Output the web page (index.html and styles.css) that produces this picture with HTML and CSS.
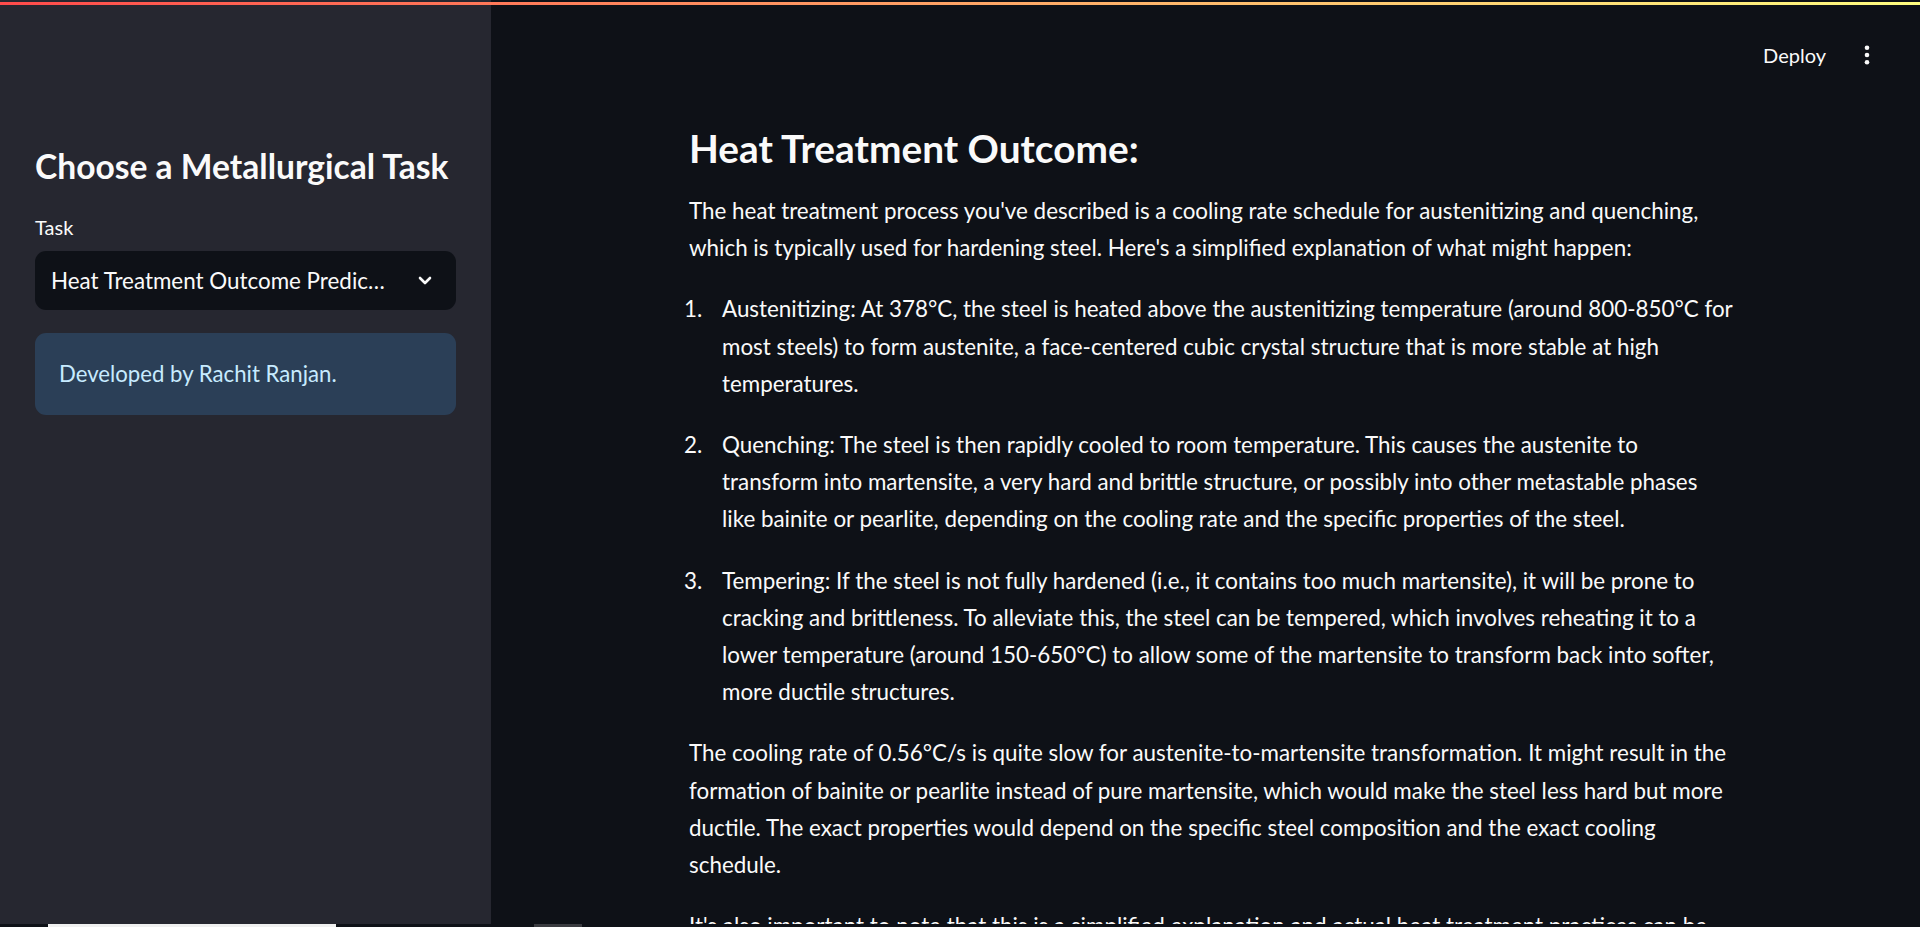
FILE: index.html
```html
<!DOCTYPE html>
<html lang="en">
<head>
<meta charset="utf-8">
<title>Metallurgical Tasks</title>
<link rel="stylesheet" href="styles.css">
</head>
<body>
<div class="decoration"></div>
<div class="app">
  <aside class="sidebar">
    <h2 class="sidebar-title">Choose a Metallurgical Task</h2>
    <div class="field-label">Task</div>
    <div class="select">
      <span class="select-value">Heat Treatment Outcome Prediction</span>
      <svg class="select-chevron" viewBox="0 0 14 9" width="14" height="9"><path d="M2 2 L7 7 L12 2" fill="none" stroke="#fafafa" stroke-width="2.6" stroke-linecap="round" stroke-linejoin="round"/></svg>
    </div>
    <div class="info">Developed by Rachit Ranjan.</div>
  </aside>
  <main class="main">
    <header class="header">
      <span class="deploy">Deploy</span>
      <svg class="kebab" viewBox="0 0 24 24" width="24" height="24"><circle cx="12" cy="4.7" r="2.3" fill="#fafafa"/><circle cx="12" cy="12" r="2.3" fill="#fafafa"/><circle cx="12" cy="19.3" r="2.3" fill="#fafafa"/></svg>
    </header>
    <article class="content">
      <h3>Heat Treatment Outcome:</h3>
      <p>The heat treatment process you've described is a cooling rate schedule for austenitizing and quenching, which is typically used for hardening steel. Here's a simplified explanation of what might happen:</p>
      <ol>
        <li>Austenitizing: At 378°C, the steel is heated above the austenitizing temperature (around 800-850°C for most steels) to form austenite, a face-centered cubic crystal structure that is more stable at high temperatures.</li>
        <li>Quenching: The steel is then rapidly cooled to room temperature. This causes the austenite to transform into martensite, a very hard and brittle structure, or possibly into other metastable phases like bainite or pearlite, depending on the cooling rate and the specific properties of the steel.</li>
        <li>Tempering: If the steel is not fully hardened (i.e., it contains too much martensite), it will be prone to cracking and brittleness. To alleviate this, the steel can be tempered, which involves reheating it to a lower temperature (around 150-650°C) to allow some of the martensite to transform back into softer, more ductile structures.</li>
      </ol>
      <p>The cooling rate of 0.56°C/s is quite slow for austenite-to-martensite transformation. It might result in the formation of bainite or pearlite instead of pure martensite, which would make the steel less hard but more ductile. The exact properties would depend on the specific steel composition and the exact cooling schedule.</p>
      <p>It's also important to note that this is a simplified explanation and actual heat treatment practices can be more complex, involving several stages and careful control of temperatures and holding times.</p>
    </article>
  </main>
</div>
<div class="bottom-strip">
  <span class="strip-thumb"></span>
  <span class="strip-mark"></span>
</div>
</body>
</html>
```
FILE: styles.css
```css
* { box-sizing: border-box; }
html, body { margin: 0; height: 100%; }
body {
  background: #0e1117;
  color: #fafafa;
  font-family: Lato, "Liberation Sans", sans-serif;
  overflow: hidden;
}
.decoration {
  position: fixed;
  top: 2px;
  left: 0;
  right: 0;
  height: 3px;
  background: linear-gradient(90deg, #ff4b4b, #fffd80);
  z-index: 5;
}
.app { display: flex; height: 927px; }

.sidebar {
  width: 491px;
  flex: none;
  background: #262730;
  padding: 146px 35px 0;
}
.sidebar-title {
  font-size: 33.6px;
  font-weight: 700;
  line-height: 1.2;
  margin: 0 0 25px;
}
.field-label { font-size: 20px; line-height: 32px; }
.select {
  margin-top: 8px;
  height: 59px;
  background: #0e1117;
  border-radius: 11px;
  display: flex;
  align-items: center;
  padding: 0 24px 0 16px;
  gap: 28px;
}
.select-value {
  flex: 1;
  min-width: 0;
  font-size: 22.4px;
  white-space: nowrap;
  overflow: hidden;
  text-overflow: ellipsis;
}
.select-chevron { flex: none; }
.info {
  margin-top: 23px;
  background: #2b3f57;
  border-radius: 11px;
  padding: 22px 24px 23px;
  color: #c7ebff;
  font-size: 22.2px;
  line-height: 37px;
}

.main { flex: 1; display: flex; flex-direction: column; }
.header {
  height: 109px;
  flex: none;
  display: flex;
  align-items: center;
  justify-content: flex-end;
  gap: 29px;
  padding-right: 41px;
}
.deploy { font-size: 20px; }
.content {
  width: 1047px;
  margin-left: 198px;
  font-size: 22.4px;
  line-height: 37.2px;
}
.content h3 {
  font-size: 38.8px;
  line-height: 48px;
  font-weight: 700;
  margin: 15px 0 20px;
}
.content p { margin: 0 0 24px; }
.content ol { margin: 0 0 24px; padding-left: 19px; }
.content li { padding-left: 14px; margin-bottom: 24px; }
.content li:last-child { margin-bottom: 0; }

.bottom-strip {
  position: fixed;
  left: 0;
  right: 0;
  bottom: 0;
  height: 3px;
  background: #0e1117;
  z-index: 5;
}
.strip-thumb {
  position: absolute;
  left: 48px;
  width: 288px;
  top: 0;
  bottom: 0;
  background: #f0f0f0;
}
.strip-mark {
  position: absolute;
  left: 534px;
  width: 48px;
  top: 0;
  bottom: 0;
  background: #3a3b40;
}
```
